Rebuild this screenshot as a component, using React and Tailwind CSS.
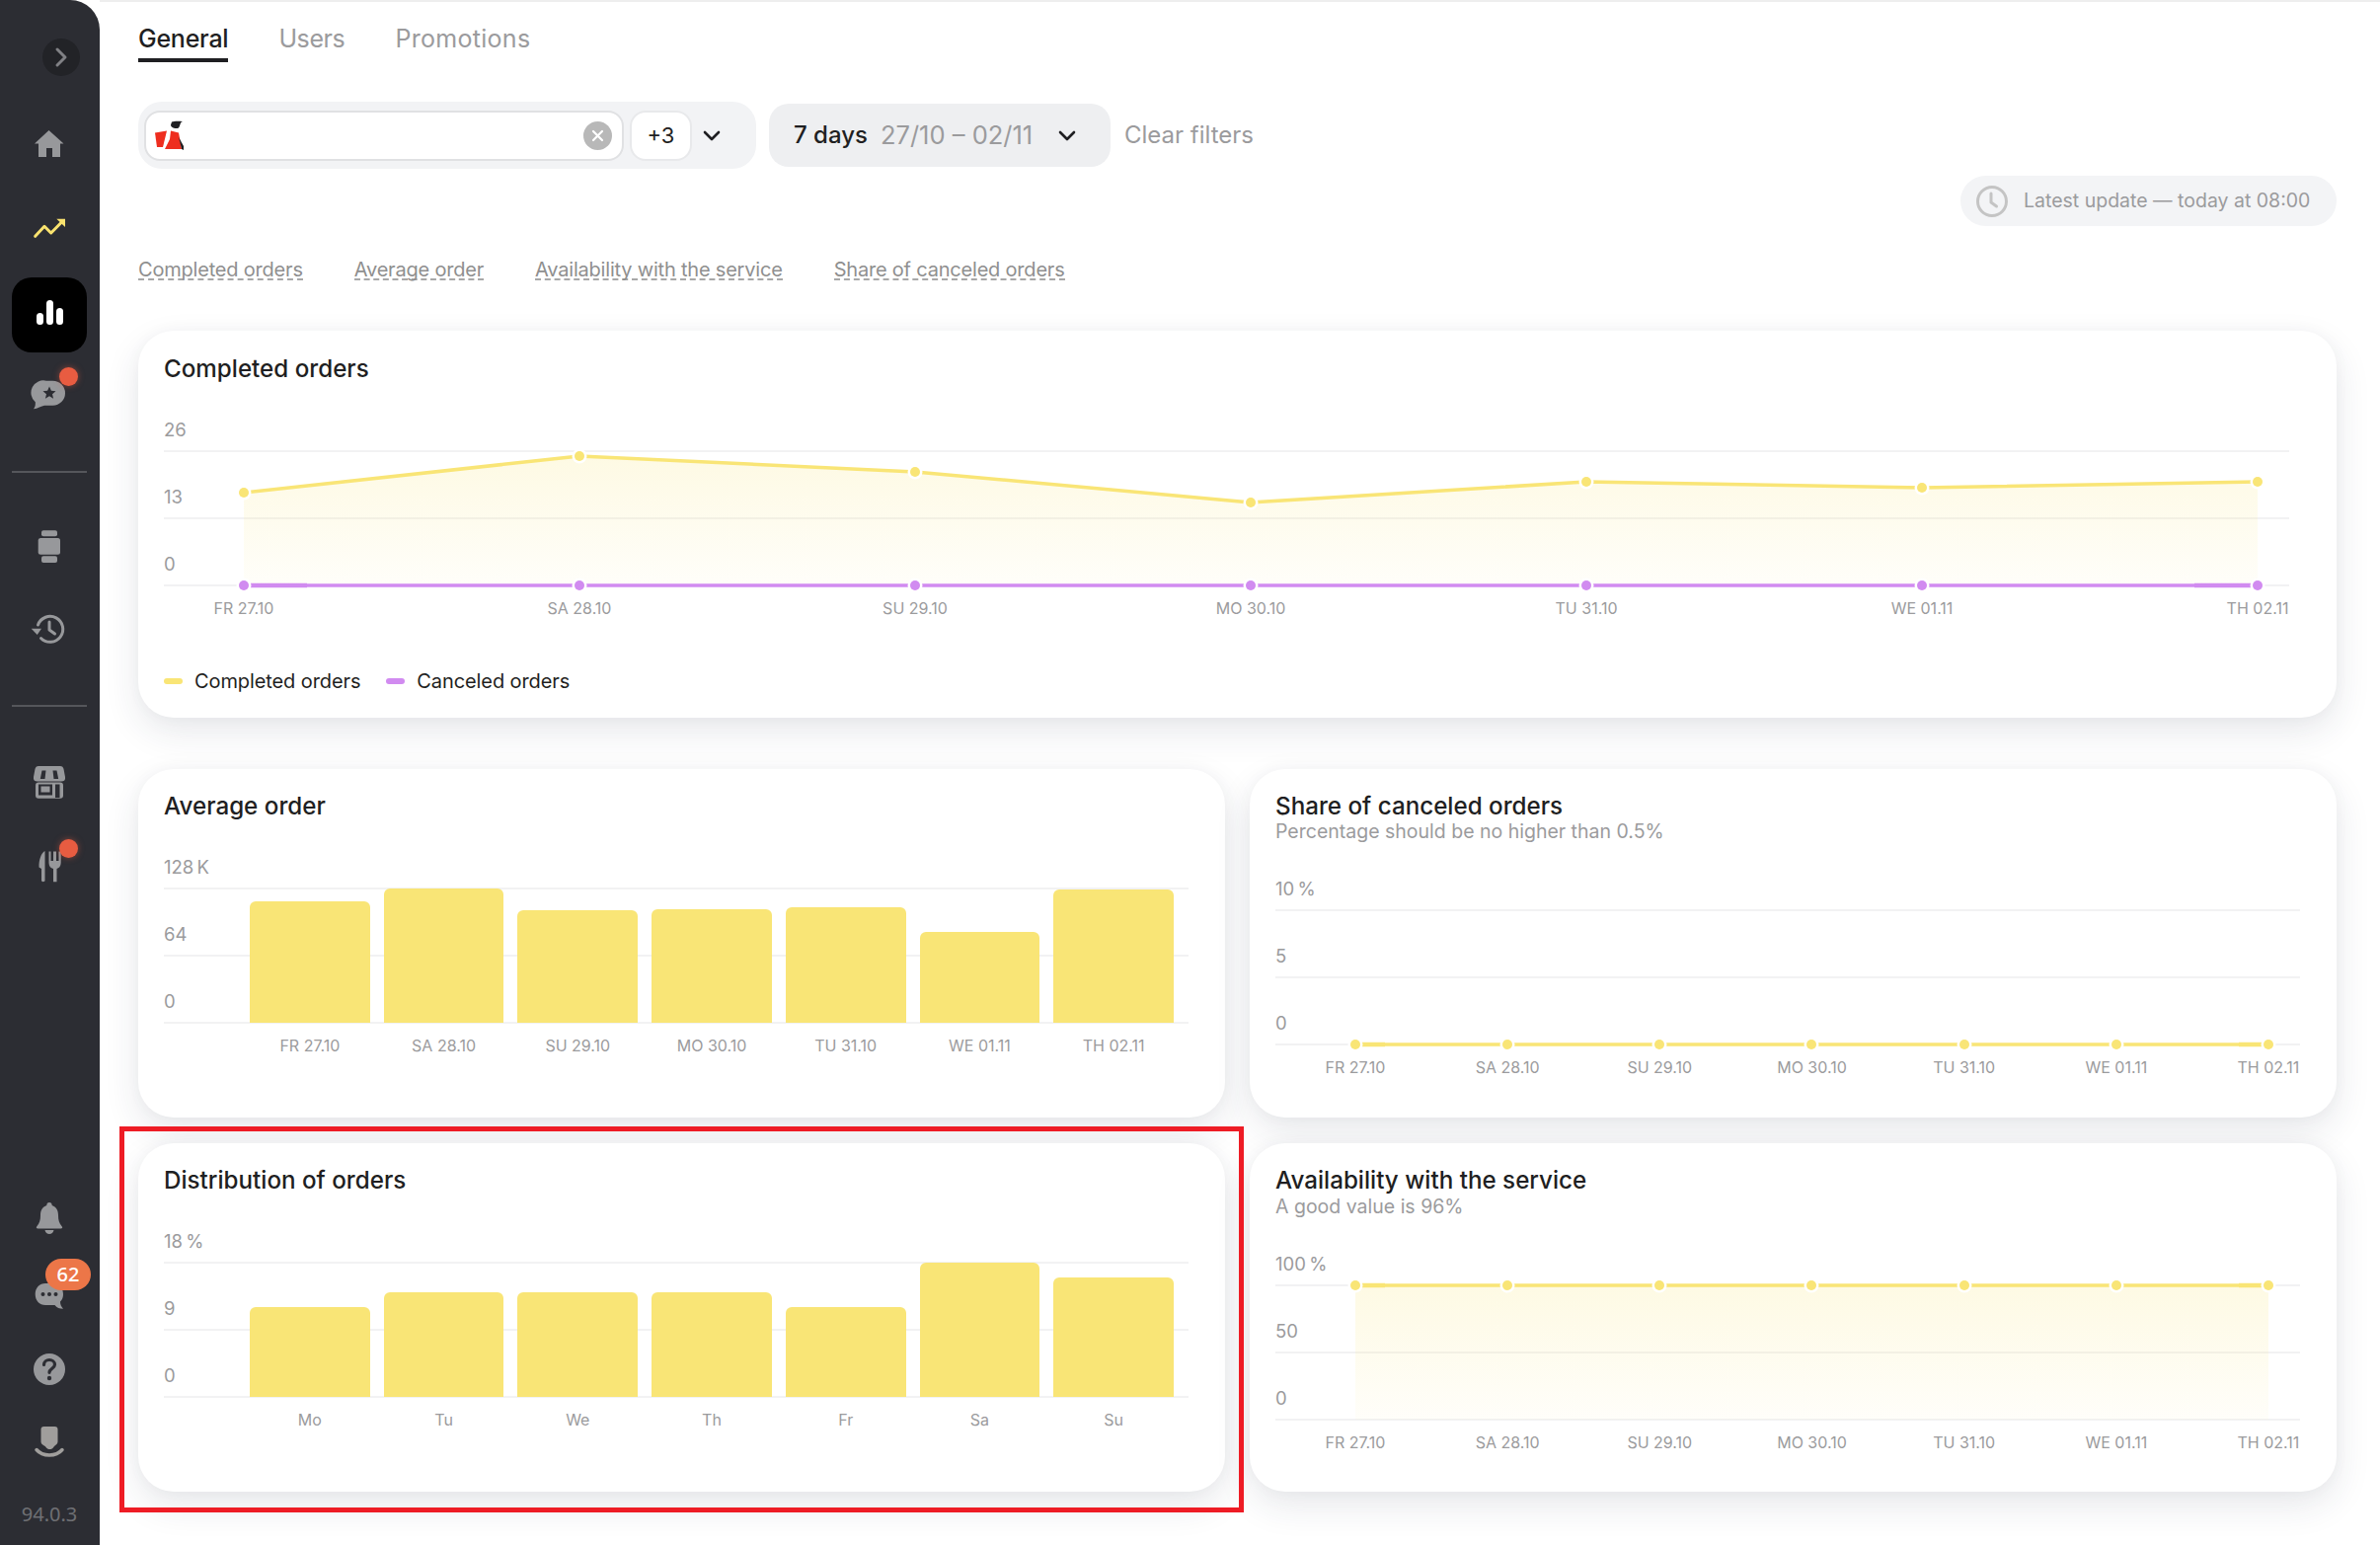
import React from "react";

const G = "#97989b";
const D = "#2c2d33";

function Slot({ className = "", children }) {
  return <div className={`relative flex h-[40px] w-[40px] shrink-0 items-center justify-center ${className}`}>{children}</div>;
}
function Ico({ children }) {
  return <svg width="40" height="40" viewBox="0 0 40 40" fill="none">{children}</svg>;
}
function Dot({ className }) {
  return <span className={`absolute left-[30px] h-[19px] w-[19px] rounded-full bg-[#e85c41] shadow-[0_0_6px_rgba(232,92,65,0.5)] ${className}`} />;
}

function Sidebar() {
  return (
    <aside className="flex h-[1565px] w-[101px] shrink-0 flex-col items-center rounded-tr-[30px] bg-[#2c2d33] pr-[1px]">
      <div className="ml-[24px] mt-[39px] flex h-[38px] w-[38px] items-center justify-center rounded-full bg-[#222327]">
        <svg width="14" height="22" viewBox="0 0 14 22" fill="none"><path d="M3 3l8 8-8 8" stroke="#808185" strokeWidth="3" strokeLinecap="round" strokeLinejoin="round" /></svg>
      </div>
      <Slot className="mt-[49px]">
        <Ico><path d="M19.5 6L34.5 19.5H31V33H23V24H17V33H9V19.5H5Z" fill={G} strokeLinejoin="round" /></Ico>
      </Slot>
      <Slot className="mt-[44px]">
        <Ico>
          <path d="M5.7 29.3L15 19.3L21.7 26L32 15.5" stroke="#fae36f" strokeWidth="3" strokeLinecap="round" strokeLinejoin="round" />
          <path d="M27.3 11.7H36V20Z" fill="#fae36f" />
        </Ico>
      </Slot>
      <div className="mt-[31px] flex h-[76px] w-[76px] items-end justify-center gap-[3px] rounded-[20px] bg-black pb-[28px]">
        <span className="h-[12px] w-[7px] rounded-full bg-white" />
        <span className="h-[25px] w-[7px] rounded-full bg-white" />
        <span className="h-[17px] w-[7px] rounded-full bg-white" />
      </div>
      <Slot className="mt-[21px]">
        <Ico>
          <path d="M17 7.7h6.5a12.5 12.5 0 0 1 0 25H15C12 33 8 36 4 36.3c1.5-2 2-4 1.800-7A12.500 12.500 0 0 1 17 7.7Z" fill={G} />
          <path d="M20 13.500l1.900 4.300 4.600.4-3.500 3 1.100 4.500-4.100-2.400-4.100 2.400 1.100-4.500-3.500-3 4.600-.4Z" fill={D} />
        </Ico>
        <Dot className="-top-[6px]" />
      </Slot>
      <div className="mt-[59px] h-[2px] w-[76px] bg-[#55565b]" />
      <Slot className="mt-[54px]">
        <Ico>
          <rect x="12" y="4.300" width="16" height="6" rx="2" fill={G} />
          <rect x="8.700" y="12" width="22.300" height="16.700" rx="2.500" fill={G} />
          <rect x="12" y="30.300" width="16" height="6.700" rx="2" fill={G} />
        </Ico>
      </Slot>
      <Slot className="mt-[44px]">
        <Ico>
          <path d="M8.500 16A13 13 0 1 1 11.500 29.500" stroke={G} strokeWidth="3" strokeLinecap="round" />
          <path d="M1.700 19.700H12L7.700 26Z" fill={G} />
          <path d="M20 13V21L25.500 25" stroke={G} strokeWidth="3" strokeLinecap="round" strokeLinejoin="round" />
        </Ico>
      </Slot>
      <div className="mt-[57px] h-[2px] w-[76px] bg-[#55565b]" />
      <Slot className="mt-[56px]">
        <Ico>
          <path d="M9 4H31C33 4 34 5 34.500 7L36 15C36.500 18 35 19.500 32 19.500H8C5 19.500 3.500 18 4 15L5.500 7C6 5 7 4 9 4Z" fill={G} />
          <path d="M12.500 8.500H16.500L15.500 17H10.800ZM23.500 8.500H27.500L29.200 17H24.500Z" fill={D} />
          <rect x="6" y="20.500" width="28" height="16.200" rx="3" fill={G} />
          <path d="M9 22.500H23V33.500H9ZM26 22.500H30.500V36H26Z" fill={D} />
          <rect x="11.500" y="24.500" width="9" height="6" fill={G} />
        </Ico>
      </Slot>
      <Slot className="mt-[46px]">
        <Ico>
          <path d="M15.500 4C11.500 6.500 9.300 13 9.500 20.500L12 22V34C12 35.500 15.500 35.500 15.500 34Z" fill={G} />
          <path d="M19.500 4.500H21.500V14H24V4.500H27V14H29.500V4.500H31.700V16C31.700 19.500 29.500 21.500 27.500 22V35.300H24V22C21.500 21.500 19.500 19.500 19.500 16Z" fill={G} />
        </Ico>
        <Dot className="-top-[8px]" />
      </Slot>
      <Slot className="mt-auto">
        <Ico>
          <path d="M20 4c1.700 0 2.700 1.300 2.700 3C27 8.500 29 12 29 17c0 5 1 8 3.500 11 1.200 1.500.8 2.500-1 2.500H8.500c-1.800 0-2.200-1-1-2.500C10 25 11 22 11 17c0-5 2-8.500 6.300-10C17.300 5.300 18.300 4 20 4Z" fill={G} />
          <path d="M15.500 32h9c-.5 2.500-2.300 4-4.500 4s-4-1.500-4.500-4Z" fill={G} />
        </Ico>
      </Slot>
      <Slot className="mt-[38px]">
        <Ico>
          <path d="M16 8h8c6 0 10 4.500 10 11 0 3-1 5.500-3 7.500 0 3 1 5 3 7.200-3.500 0-6.500-1.200-8.500-3.800C24 30 23 30 22 30h-6C10 30 5.700 25.500 5.700 19S10 8 16 8Z" fill={G} />
          <circle cx="13.500" cy="19" r="2" fill={D} /><circle cx="20" cy="19" r="2" fill={D} /><circle cx="26.500" cy="19" r="2" fill={D} />
        </Ico>
        <span className="absolute left-[16px] -top-[17px] flex h-[32px] w-[46px] items-center justify-center rounded-full bg-[#ec7648] font-['Noto_Sans',sans-serif] text-[20px] font-medium leading-none text-white">62</span>
      </Slot>
      <Slot className="mt-[35px]">
        <Ico>
          <circle cx="20" cy="20" r="16" fill={G} />
          <path d="M14.500 15.500c0-3 2.500-5 5.500-5s5.500 2 5.500 4.800c0 4-5.500 4-5.500 8" stroke={D} strokeWidth="3.200" strokeLinecap="round" />
          <circle cx="20" cy="29" r="2.200" fill={D} />
        </Ico>
      </Slot>
      <Slot className="mt-[33px]">
        <Ico>
          <path d="M11.500 8c0-2 1-3 3-3h11c2 0 3 1 3 3v12c0 3-2 3.500-3.500 5-1.200 1.200-1.500 3-4.500 3s-3.500-1.800-4.800-3C13.500 23.500 11.500 23 11.500 20Z" fill="#a09e9c" />
          <path d="M7 28.500C10 32 14.500 34 20 34s10-2 13-5.500" stroke="#a09e9c" strokeWidth="3.500" strokeLinecap="round" />
        </Ico>
      </Slot>
      <div className="mb-[19px] mt-[42px] h-[24px] font-['Noto_Sans',sans-serif] text-[20px] leading-[24px] text-[#6f7074]">94.0.3</div>
    </aside>
  );
}

function Chevron({ className = "" }) {
  return (
    <svg className={className} width="18" height="11" viewBox="0 0 18 11" fill="none">
      <path d="M2 2l7 7 7-7" stroke="#1f1f22" strokeWidth="2.600" strokeLinecap="round" strokeLinejoin="round" />
    </svg>
  );
}

function Logo() {
  return (
    <svg className="ml-[9px] shrink-0" width="31" height="31" viewBox="0 0 31 31" fill="none">
      <path d="M17 1.500C19 .5 24 .5 28 1 25 2 26 5 24 7.500 21 9 16 7.500 16 4.500Z" fill="#1f1f22" />
      <path d="M0 12.500L12 10.500 8 27 2 27Z" fill="#ee2e1f" />
      <path d="M16 10.500L24 12.500 27 29H10L15 19Z" fill="#ee2e1f" />
      <path d="M24 17L29 26 29 30 27 29Z" fill="#1f1f22" />
    </svg>
  );
}

function Filters() {
  return (
    <div className="mt-[40px] flex h-[68px] items-center">
      <div className="flex h-[68px] w-[626px] items-center rounded-[24px] bg-[#f2f3f5] pl-[6px]">
        <div className="flex h-[51px] w-[486px] items-center rounded-[16px] border-2 border-[#e0e1e3] bg-white">
          <Logo />
          <span className="ml-auto mr-[10px] flex h-[29px] w-[29px] items-center justify-center rounded-full bg-[#b8b8b8]">
            <svg width="13" height="13" viewBox="0 0 13 13" fill="none"><path d="M2 2l9 9M11 2l-9 9" stroke="#fff" strokeWidth="2.200" strokeLinecap="round" /></svg>
          </span>
        </div>
        <div className="ml-[6px] flex h-[51px] w-[63px] items-center justify-center rounded-[16px] border-2 border-[#e8e9eb] bg-white text-[22px] text-[#1f1f22]">+3</div>
        <Chevron className="ml-[11px]" />
      </div>
      <div className="ml-[13px] flex h-[64px] w-[346px] items-center rounded-[20px] bg-[#eeeff1] pl-[25px]">
        <span className="text-[24px] font-medium text-[#1f1f22]">7 days</span>
        <span className="ml-[13px] text-[25.5px] text-[#9b9b9d]">27/10 – 02/11</span>
        <Chevron className="ml-auto mr-[35px]" />
      </div>
      <span className="ml-[14px] text-[24px] text-[#9b9b9d]">Clear filters</span>
    </div>
  );
}

function Title({ children, sub, pad = "pt-[24px]", subClass = "-mt-[2px]" }) {
  return (
    <div className={pad}>
      <div className="h-[30px] text-[24.2px] font-medium leading-[28px] text-[#1f1f22]">{children}</div>
      {sub && <div className={`h-[22px] text-[19.5px] leading-[22px] text-[#9b9b9d] ${subClass}`}>{sub}</div>}
    </div>
  );
}

function Rows({ labels, children }) {
  return (
    <div className="relative">
      {labels.map((l) => (
        <div key={l} className="flex h-[68px] items-end border-b-2 border-[#f2f2f3] pb-[10px] text-[18.5px] leading-[21px] text-[#9b9b9d]">{l}</div>
      ))}
      {children}
    </div>
  );
}

const DATES = ["FR 27.10", "SA 28.10", "SU 29.10", "MO 30.10", "TU 31.10", "WE 01.11", "TH 02.11"];

function XLabels({ className = "" }) {
  return (
    <div className={`ml-[81px] mr-[32px] flex h-[20px] justify-between text-[16px] leading-[20px] text-[#9b9b9d] ${className}`}>
      {DATES.map((d) => (
        <span key={d} className="flex w-0 justify-center whitespace-nowrap">{d}</span>
      ))}
    </div>
  );
}

function LineOverlay({ width, series, gradId }) {
  const stroke = (pts, color, w, fat) => {
    const line = pts.map((p) => p.join(",")).join(" ");
    const a = pts[0], b = pts[1], y = pts[pts.length - 1], z = pts[pts.length - 2];
    const lerp = (p, q, t) => [p[0] + (q[0] - p[0]) * t, p[1] + (q[1] - p[1]) * t];
    const f1 = lerp(a, b, fat / (b[0] - a[0]));
    const f2 = lerp(y, z, fat / (y[0] - z[0]));
    return (
      <>
        <polyline points={line} stroke={color} strokeWidth={w} fill="none" strokeLinejoin="round" />
        <line x1={a[0]} y1={a[1]} x2={f1[0]} y2={f1[1]} stroke={color} strokeWidth={w + 1} />
        <line x1={y[0]} y1={y[1]} x2={f2[0]} y2={f2[1]} stroke={color} strokeWidth={w + 1} />
      </>
    );
  };
  return (
    <svg className="absolute left-0 top-0 overflow-visible" width={width} height="204" viewBox={`0 0 ${width} 204`} fill="none">
      <defs>
        <linearGradient id={gradId} x1="0" y1="0" x2="0" y2="1">
          <stop offset="0" stopColor="#f9e576" stopOpacity="0.2" />
          <stop offset="1" stopColor="#f9e576" stopOpacity="0.04" />
        </linearGradient>
      </defs>
      {series.map((s, i) =>
        s.area ? (
          <polygon key={`a${i}`} fill={`url(#${gradId})`} points={`${s.pts[0][0]},203 ${s.pts.map((p) => p.join(",")).join(" ")} ${s.pts[s.pts.length - 1][0]},203`} />
        ) : null
      )}
      {series.map((s, i) => (
        <g key={i}>
          {stroke(s.pts, s.color, 3.5, s.fat)}
          {s.pts.map((p, j) => (
            <g key={j}>
              <circle cx={p[0]} cy={p[1]} r="7.500" fill="#fff" />
              <circle cx={p[0]} cy={p[1]} r="5" fill={s.color} />
            </g>
          ))}
        </g>
      ))}
    </svg>
  );
}

function Card({ className = "", children }) {
  return (
    <section className={`rounded-[36px] bg-white pl-[26px] shadow-[0_14px_36px_rgba(40,50,70,0.11),0_0_16px_rgba(40,50,70,0.03)] ${className}`}>
      {children}
    </section>
  );
}

function Bars({ values }) {
  return (
    <div className="absolute bottom-[1px] left-[87px] right-[15px] flex h-[136px] items-end gap-[14px]">
      {values.map((v, i) => (
        <div key={i} className="flex-1 rounded-t-[6px] bg-[#f9e576]" style={{ height: v }} />
      ))}
    </div>
  );
}

function BarCard({ title, labels, values, x }) {
  return (
    <Card className="h-[353px] pr-[37px]">
      <Title>{title}</Title>
      <Rows labels={labels}><Bars values={values} /></Rows>
      <div className="ml-[87px] mr-[15px] mt-[12px] grid h-[20px] grid-cols-7 gap-[14px] text-center text-[16px] leading-[20px] text-[#9b9b9d]">
        {x.map((d) => <span key={d}>{d}</span>)}
      </div>
    </Card>
  );
}

const XP = [81, 235, 389, 543, 698, 852, 1006];

function Tab({ active, children, className = "" }) {
  return (
    <div className={`flex h-[61px] items-center border-b-4 pt-[19px] text-[25px] ${active ? "border-[#1f1f22] font-medium text-[#1f1f22]" : "border-transparent text-[#9b9b9d]"} ${className}`}>
      {children}
    </div>
  );
}

function Anchor({ children }) {
  return <a className="h-[22px] border-b-2 border-dashed border-[#a8a8a8] text-[20px] leading-[22px] tracking-[-0.2px] text-[#8f8f8f]">{children}</a>;
}

export default function App() {
  const cardX = [81, 421, 761, 1101, 1441, 1781, 2121];
  const cardY = [109, 72, 88, 119, 98, 104, 98];
  return (
    <div className="flex h-[1565px] w-[2411px] overflow-hidden bg-white font-['Inter','Noto_Sans',sans-serif]">
      <Sidebar />
      <main className="min-w-0 flex-1 border-t-2 border-[#eeeeee] pl-[39px] pr-[44px]">
        <nav className="flex gap-[51px]">
          <Tab active className="tracking-[-0.25px]">General</Tab>
          <Tab className="tracking-[-0.4px]">Users</Tab>
          <Tab className="tracking-[0.3px]">Promotions</Tab>
        </nav>
        <Filters />
        <div className="mt-[7px] flex justify-end">
          <div className="flex h-[51px] w-[381px] items-center rounded-full bg-[#f3f4f6] pl-[16px]">
            <svg width="32" height="32" viewBox="0 0 32 32" fill="none">
              <circle cx="16" cy="16" r="14.500" stroke="#c4c4c4" strokeWidth="3" />
              <path d="M15 8v9l5.500 4" stroke="#c4c4c4" strokeWidth="3" strokeLinecap="round" strokeLinejoin="round" />
            </svg>
            <span className="ml-[16px] text-[19.5px] text-[#9b9b9d]">Latest update — today at 08:00</span>
          </div>
        </div>
        <div className="mt-[33px] flex h-[28px] items-start gap-[52px]">
          <Anchor>Completed orders</Anchor>
          <Anchor>Average order</Anchor>
          <Anchor>Availability with the service</Anchor>
          <Anchor>Share of canceled orders</Anchor>
        </div>

        <Card className="mt-[45px] h-[392px] pr-[48px]">
          <Title pad="pt-[25px]">Completed orders</Title>
          <Rows labels={["26", "13", "0"]}>
            <LineOverlay
              width={2153}
              gradId="g1"
              series={[
                { color: "#f9e576", area: true, fat: 0, pts: cardX.map((x, i) => [x, cardY[i]]) },
                { color: "#d18bf0", fat: 64, pts: cardX.map((x) => [x, 203]) },
              ]}
            />
          </Rows>
          <XLabels className="mt-[12px]" />
          <div className="mt-[51px] flex h-[26px] items-center text-[20px] tracking-[-0.1px] text-[#1f1f22]">
            <span className="h-[6px] w-[19px] rounded-full bg-[#f9e576]" />
            <span className="ml-[12px]">Completed orders</span>
            <span className="ml-[26px] h-[6px] w-[19px] rounded-full bg-[#d18bf0]" />
            <span className="ml-[12px]">Canceled orders</span>
          </div>
        </Card>

        <div className="mt-[52px] grid grid-cols-2 gap-x-[25px] gap-y-[26px]">
          <BarCard title="Average order" labels={["128\u2009K", "64", "0"]} values={[123, 136, 114, 115, 117, 92, 135]} x={DATES} />
          <Card className="h-[353px] pr-[37px]">
            <Title sub="Percentage should be no higher than 0.5%">Share of canceled orders</Title>
            <div className="mt-[2px]">
              <Rows labels={["10\u2009%", "5", "0"]}>
                <LineOverlay width={1038} gradId="g2" series={[{ color: "#f9e576", fat: 30, pts: XP.map((x) => [x, 203]) }]} />
              </Rows>
            </div>
            <XLabels className="mt-[12px]" />
          </Card>
          <BarCard title="Distribution of orders" labels={["18\u2009%", "9", "0"]} values={[91, 106, 106, 106, 91, 136, 121]} x={["Mo", "Tu", "We", "Th", "Fr", "Sa", "Su"]} />
          <Card className="h-[353px] pr-[37px]">
            <Title sub="A good value is 96%" subClass="-mt-[1px]">Availability with the service</Title>
            <div className="mt-[2px]">
              <Rows labels={["100\u2009%", "50", "0"]}>
                <LineOverlay width={1038} gradId="g3" series={[{ color: "#f9e576", area: true, fat: 30, pts: XP.map((x) => [x, 67]) }]} />
              </Rows>
            </div>
            <XLabels className="mt-[12px]" />
          </Card>
        </div>
      </main>
      {/* highlight drawn over the page */}
      <div className="pointer-events-none absolute left-[121px] top-[1141px] h-[391px] w-[1139px] border-[5px] border-[#ee1c25]" />
    </div>
  );
}
